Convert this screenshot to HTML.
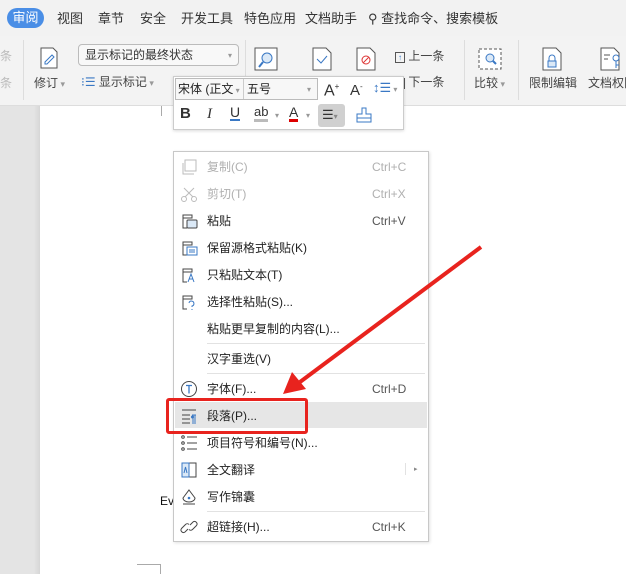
<!DOCTYPE html>
<html><head><meta charset="utf-8"><style>
*{margin:0;padding:0;box-sizing:border-box}
body{width:626px;height:574px;overflow:hidden;position:relative;background:#e4e4e4;font-family:"Liberation Sans","Noto Sans CJK SC",sans-serif;font-size:12px;color:#333;line-height:16px}
.a{position:absolute;white-space:nowrap}
.tab{top:10px;font-size:13px;color:#333;line-height:18px}
.r{font-size:12px;color:#444}
.mi{position:absolute;left:207px;font-size:12px;color:#222;line-height:16px}
.sc{position:absolute;left:372px;font-size:12px;color:#555;line-height:16px}
.dis{color:#b0b0b0}
.ic{position:absolute;left:180px;width:18px;height:18px}
</style></head><body>
<div class="a" style="left:0;top:0;width:626px;height:36px;background:#f2f2f2"></div>
<div class="a" style="left:7px;top:8px;width:37px;height:20px;border-radius:10px;background:#4a8ee6;color:#fff;font-size:13px;text-align:center;line-height:20px">审阅</div>
<div class="a tab" style="left:57px">视图</div>
<div class="a tab" style="left:98px">章节</div>
<div class="a tab" style="left:140px">安全</div>
<div class="a tab" style="left:181px">开发工具</div>
<div class="a tab" style="left:244px">特色应用</div>
<div class="a tab" style="left:305px">文档助手</div>
<div class="a tab" style="left:368px">⚲ 查找命令、搜索模板</div>
<div class="a" style="left:0;top:36px;width:626px;height:70px;background:#f3f3f3;border-bottom:1px solid #ddd"></div>
<div class="a r" style="left:0;top:48px;color:#bbb">条</div>
<div class="a r" style="left:0;top:75px;color:#bbb">条</div>
<div class="a" style="left:23px;top:40px;width:1px;height:60px;background:#ddd"></div>
<svg class="a" style="left:38px;top:46px" width="22" height="24"><path d="M3 2h12l4 4v16H3z" fill="#fff" stroke="#555"/><path d="M7 16l7-7 2 2-7 7H7z" fill="none" stroke="#3a78c4"/></svg>
<div class="a r" style="left:34px;top:75px">修订<span style="color:#999;font-size:9px"> ▾</span></div>
<div class="a" style="left:78px;top:44px;width:161px;height:22px;border:1px solid #bbb;border-radius:4px;background:#f8f8f8;padding:2px 6px;font-size:12px">显示标记的最终状态<span style="position:absolute;right:6px;color:#999;font-size:8px;top:3px">▾</span></div>
<div class="a r" style="left:81px;top:74px"><span style="color:#3a78c4">⁝☰</span> 显示标记<span style="color:#999;font-size:9px"> ▾</span></div>
<svg class="a" style="left:253px;top:46px" width="26" height="26"><rect x="2" y="2" width="22" height="22" fill="#fff" stroke="#555"/><circle cx="14" cy="12" r="5" fill="#dbe9f7" stroke="#3a78c4"/><path d="M10 16l-4 5" stroke="#3a78c4" stroke-width="2"/></svg>
<div class="a" style="left:245px;top:40px;width:1px;height:60px;background:#ddd"></div>
<svg class="a" style="left:311px;top:46px" width="22" height="26"><path d="M2 2h13l5 5v17H2z" fill="#fff" stroke="#555"/><path d="M6 13l4 4 6-7" stroke="#3a78c4" fill="none"/></svg>
<svg class="a" style="left:355px;top:46px" width="22" height="26"><path d="M2 2h13l5 5v17H2z" fill="#fff" stroke="#555"/><circle cx="11" cy="14" r="4" fill="none" stroke="#d33"/><path d="M8 17l6-6" stroke="#d33"/></svg>
<div class="a r" style="left:395px;top:48px"><span style="border:1px solid #555;font-size:8px;padding:0 2px;color:#3a78c4">↑</span> 上一条</div>
<div class="a r" style="left:395px;top:74px"><span style="border:1px solid #555;font-size:8px;padding:0 2px;color:#fff">↓</span> 下一条</div>
<div class="a" style="left:464px;top:40px;width:1px;height:60px;background:#ddd"></div>
<svg class="a" style="left:477px;top:46px" width="26" height="26"><rect x="2" y="3" width="22" height="20" fill="#fff" stroke="#555" stroke-dasharray="3 2"/><circle cx="13" cy="12" r="4" fill="#dbe9f7" stroke="#3a78c4"/><path d="M16 15l3 3" stroke="#3a78c4" stroke-width="2"/></svg>
<div class="a r" style="left:474px;top:75px">比较<span style="color:#999;font-size:9px"> ▾</span></div>
<div class="a" style="left:518px;top:40px;width:1px;height:60px;background:#ddd"></div>
<svg class="a" style="left:541px;top:46px" width="22" height="26"><path d="M2 2h13l5 5v17H2z" fill="#fff" stroke="#555"/><rect x="7" y="15" width="8" height="6" fill="#dbe9f7" stroke="#3a78c4"/><path d="M8 15v-3a3 3 0 0 1 6 0v3" fill="none" stroke="#3a78c4"/></svg>
<div class="a r" style="left:529px;top:75px">限制编辑</div>
<svg class="a" style="left:599px;top:46px" width="24" height="26"><path d="M2 2h13l5 5v17H2z" fill="#fff" stroke="#555"/><path d="M5 9h6M5 13h4" stroke="#555"/><circle cx="17" cy="12" r="3" fill="none" stroke="#3a78c4"/><path d="M17 15v7M17 19h3" stroke="#3a78c4"/></svg>
<div class="a r" style="left:588px;top:75px">文档权限</div>
<div class="a" style="left:40px;top:106px;width:586px;height:468px;background:#fff"></div>
<div class="a" style="left:34px;top:106px;width:6px;height:468px;background:linear-gradient(90deg,#e4e4e4,#d6d6d6)"></div>
<div class="a" style="left:161px;top:106px;width:1px;height:10px;background:#aaa"></div>
<div class="a" style="left:357px;top:106px;width:1px;height:10px;background:#aaa"></div>
<div class="a" style="left:137px;top:564px;width:24px;height:1px;background:#aaa"></div>
<div class="a" style="left:160px;top:564px;width:1px;height:10px;background:#aaa"></div>
<div class="a" style="left:160px;top:493px;font-size:12px;color:#111">Ev</div>
<div class="a" style="left:173px;top:76px;width:231px;height:54px;background:#fff;border:1px solid #ccc;box-shadow:0 1px 3px rgba(0,0,0,.15)"></div>
<div class="a" style="left:175px;top:78px;width:143px;height:22px;border:1px solid #bbb;background:#f7f7f7"></div>
<div class="a" style="left:243px;top:79px;width:1px;height:20px;background:#ccc"></div>
<div class="a" style="left:178px;top:81px;font-size:12px;color:#222">宋体 (正文<span style="font-size:8px;color:#999"> ▾</span></div>
<div class="a" style="left:247px;top:81px;font-size:12px;color:#222">五号</div>
<div class="a" style="left:307px;top:82px;font-size:8px;color:#999">▾</div>
<div class="a" style="left:324px;top:79px;font-size:16px;color:#333">A<sup style="font-size:8px">+</sup></div>
<div class="a" style="left:350px;top:79px;font-size:15px;color:#333">A<sup style="font-size:8px">-</sup></div>
<div class="a" style="left:373px;top:80px;font-size:13px;color:#3a78c4">↕☰<span style="font-size:8px;color:#999"> ▾</span></div>
<div class="a" style="left:180px;top:106px;font-size:15px;font-weight:bold;color:#333">B</div>
<div class="a" style="left:207px;top:106px;font-size:15px;font-style:italic;font-family:'Liberation Serif',serif;color:#333">I</div>
<div class="a" style="left:230px;top:105px;font-size:14px;color:#333;border-bottom:2px solid #3a78c4;line-height:14px">U</div>
<div class="a" style="left:254px;top:105px;font-size:13px;color:#333;border-bottom:3px solid #bbb;line-height:14px">ab</div>
<div class="a" style="left:275px;top:108px;font-size:8px;color:#999">▾</div>
<div class="a" style="left:289px;top:105px;font-size:14px;color:#333;border-bottom:3px solid #d00;line-height:14px">A</div>
<div class="a" style="left:306px;top:108px;font-size:8px;color:#999">▾</div>
<div class="a" style="left:318px;top:104px;width:27px;height:23px;background:#d0d0d0;border-radius:3px;font-size:13px;padding:3px 4px;color:#333">☰<span style="font-size:8px;color:#888">▾</span></div>
<svg class="a" style="left:355px;top:106px" width="18" height="18"><path d="M7 2h4v6h5v8H2V8h5z" fill="#fff" stroke="#3a78c4"/><path d="M2 12h14" stroke="#3a78c4"/></svg>
<div class="a" style="left:173px;top:151px;width:256px;height:391px;background:#fff;border:1px solid #c8c8c8;box-shadow:1px 1px 3px rgba(0,0,0,.12)"></div>
<div class="a" style="left:175px;top:402px;width:252px;height:26px;background:#e6e6e6"></div>
<svg class="ic" style="top:158px"><rect x="5" y="2" width="11" height="11" fill="none" stroke="#bbb"/><path d="M3 5v11h11" fill="none" stroke="#bbb"/></svg>
<div class="mi dis" style="top:159px">复制(C)</div><div class="sc dis" style="top:159px">Ctrl+C</div>
<svg class="ic" style="top:185px"><circle cx="4" cy="14" r="2.5" fill="none" stroke="#bbb"/><circle cx="14" cy="14" r="2.5" fill="none" stroke="#bbb"/><path d="M5 12L14 3M13 12L4 3" stroke="#bbb"/></svg>
<div class="mi dis" style="top:186px">剪切(T)</div><div class="sc dis" style="top:186px">Ctrl+X</div>
<svg class="ic" style="top:212px"><path d="M3 3h9v3H3zM3 3v13h4" fill="none" stroke="#444"/><rect x="7" y="8" width="10" height="8" rx="1" fill="#dbe9f7" stroke="#444"/></svg>
<div class="mi" style="top:213px">粘贴</div><div class="sc" style="top:213px">Ctrl+V</div>
<svg class="ic" style="top:239px"><path d="M3 3h9v3H3zM3 3v13h4" fill="none" stroke="#444"/><rect x="7" y="8" width="10" height="8" fill="#fff" stroke="#3a78c4"/><path d="M9 11h6M9 13h6" stroke="#3a78c4"/></svg>
<div class="mi" style="top:240px">保留源格式粘贴(K)</div>
<svg class="ic" style="top:266px"><path d="M3 3h9v3H3zM3 3v13h4" fill="none" stroke="#444"/><path d="M8 16l3-8 3 8M9 13h4" fill="none" stroke="#3a78c4"/></svg>
<div class="mi" style="top:267px">只粘贴文本(T)</div>
<svg class="ic" style="top:293px"><path d="M3 3h9v3H3zM3 3v13h4" fill="none" stroke="#444"/><path d="M9 10a2.5 2.5 0 1 1 3 3v1M12 16v1" fill="none" stroke="#3a78c4"/></svg>
<div class="mi" style="top:294px">选择性粘贴(S)...</div>
<div class="mi" style="top:321px">粘贴更早复制的内容(L)...</div>
<div class="a" style="left:207px;top:343px;width:218px;height:1px;background:#e2e2e2"></div>
<div class="mi" style="top:351px">汉字重选(V)</div>
<div class="a" style="left:207px;top:373px;width:218px;height:1px;background:#e2e2e2"></div>
<svg class="ic" style="top:380px"><circle cx="9" cy="9" r="7.5" fill="none" stroke="#444"/><path d="M6 5.5h6M9 5.5v8" stroke="#3a78c4" stroke-width="1.3"/></svg>
<div class="mi" style="top:381px">字体(F)...</div><div class="sc" style="top:381px">Ctrl+D</div>
<svg class="ic" style="top:407px"><path d="M2 3h14M2 8h8M2 12h8M2 16h8" stroke="#444"/><path d="M13 8v9M15 8v9M12 8h4" stroke="#3a78c4"/><circle cx="12.5" cy="10" r="1.5" fill="#3a78c4"/></svg>
<div class="mi" style="top:408px">段落(P)...</div>
<svg class="ic" style="top:434px"><circle cx="3" cy="3" r="1.3" fill="none" stroke="#444"/><circle cx="3" cy="9" r="1.3" fill="none" stroke="#444"/><circle cx="3" cy="15" r="1.3" fill="none" stroke="#444"/><path d="M7 3h10M7 9h10M7 15h10" stroke="#444"/></svg>
<div class="mi" style="top:435px">项目符号和编号(N)...</div>
<svg class="ic" style="top:461px"><rect x="2" y="2" width="14" height="14" fill="#fff" stroke="#444"/><rect x="2" y="2" width="7" height="14" fill="#dbe9f7" stroke="#3a78c4"/><path d="M4 12l1.5-6 1.5 6" fill="none" stroke="#3a78c4"/></svg>
<div class="mi" style="top:462px">全文翻译</div>
<div class="a" style="left:405px;top:463px;width:1px;height:12px;background:#e2e2e2"></div>
<div class="a" style="left:414px;top:462px;font-size:7px;color:#888">▸</div>
<svg class="ic" style="top:488px"><path d="M9 2l6 8a6 4 0 0 1-12 0z" fill="none" stroke="#444"/><circle cx="9" cy="10" r="1.3" fill="#3a78c4"/><path d="M3 16h12" stroke="#444"/></svg>
<div class="mi" style="top:489px">写作锦囊</div>
<div class="a" style="left:207px;top:511px;width:218px;height:1px;background:#e2e2e2"></div>
<svg class="ic" style="top:518px"><path d="M8 11l-3 3a2.5 2.5 0 0 1-3.5-3.5l4-4a2.5 2.5 0 0 1 3.5 0M10 7l3-3a2.5 2.5 0 0 1 3.5 3.5l-4 4a2.5 2.5 0 0 1-3.5 0" fill="none" stroke="#444"/></svg>
<div class="mi" style="top:519px">超链接(H)...</div><div class="sc" style="top:519px">Ctrl+K</div>
<div class="a" style="left:166px;top:398px;width:142px;height:36px;border:3px solid #e8231e;border-radius:3px"></div>
<svg class="a" style="left:0;top:0" width="626" height="574"><path d="M481 247L300 382" stroke="#e8231e" stroke-width="4"/><path d="M283 394l9-22 14 17z" fill="#e8231e"/></svg>
</body></html>
